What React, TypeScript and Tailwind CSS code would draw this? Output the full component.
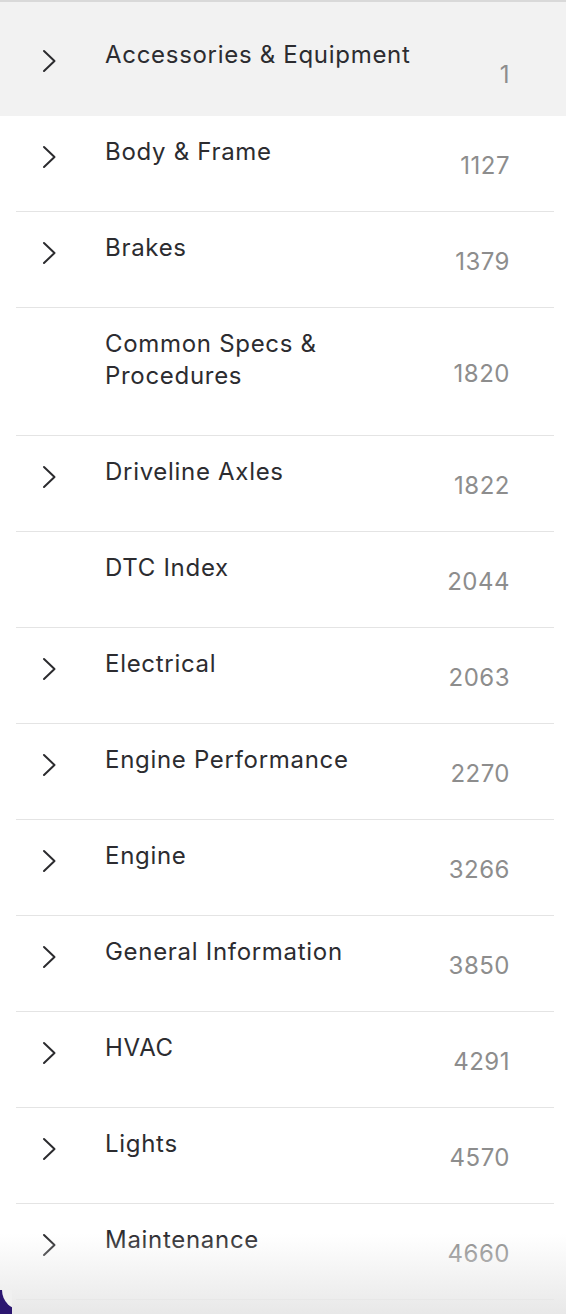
import React from "react";

type Item = { title: string; count: number; chevron: boolean };

const items: Item[] = [
  { title: "Accessories & Equipment", count: 1, chevron: true },
  { title: "Body & Frame", count: 1127, chevron: true },
  { title: "Brakes", count: 1379, chevron: true },
  { title: "Common Specs & Procedures", count: 1820, chevron: false },
  { title: "Driveline Axles", count: 1822, chevron: true },
  { title: "DTC Index", count: 2044, chevron: false },
  { title: "Electrical", count: 2063, chevron: true },
  { title: "Engine Performance", count: 2270, chevron: true },
  { title: "Engine", count: 3266, chevron: true },
  { title: "General Information", count: 3850, chevron: true },
  { title: "HVAC", count: 4291, chevron: true },
  { title: "Lights", count: 4570, chevron: true },
  { title: "Maintenance", count: 4660, chevron: true },
];

function Chevron() {
  return (
    <svg width="14" height="24" viewBox="0 0 14 24" fill="none">
      <path d="M2 2 L12.5 12 L2 22" stroke="#2b2b2e" strokeWidth="2" strokeLinecap="round" strokeLinejoin="round" />
    </svg>
  );
}

export default function App() {
  return (
    <div
      className="relative w-[566px] h-[1314px] overflow-hidden bg-white border-t-2 border-[#d9d9d9]"
      style={{ fontFamily: "Inter, 'Noto Sans', sans-serif" }}
    >
      <ul className="flex flex-col">
        {items.map((it, i) => (
          <li key={it.title} className={i === 0 ? "bg-[#f2f2f2]" : "bg-white"}>
            <div
              className={
                i === 0
                  ? "ml-4 mr-3 flex items-stretch"
                  : "ml-4 mr-3 flex items-stretch border-b border-[#e4e4e4]"
              }
            >
              <div className={i === 0 ? "w-[89px] shrink-0 pl-[26px] pt-[47px]" : "w-[89px] shrink-0 pl-[26px] pt-[29px]"}>
                {it.chevron && <Chevron />}
              </div>
              <div
                className={
                  i === 0
                    ? "flex-1 pt-[37px] pb-[45px] text-[24px] leading-[32px] tracking-[0.7px] text-[#2c2c30]"
                    : "flex-1 pt-[20px] pb-[43px] text-[24px] leading-[32px] tracking-[0.7px] text-[#2c2c30]"
                }
              >
                {it.title === "Common Specs & Procedures" ? (
                  <>
                    Common Specs &amp;
                    <br />
                    Procedures
                  </>
                ) : (
                  it.title
                )}
              </div>
              <div
                className={
                  i === 0
                    ? "flex items-center pt-[31px] pr-[44px] text-[24px] tracking-[0.5px] text-[#8d8d8d]"
                    : "flex items-center pt-[4px] pr-[44px] text-[24px] tracking-[0.5px] text-[#8d8d8d]"
                }
              >
                {it.count}
              </div>
            </div>
          </li>
        ))}
      </ul>
      <div className="pointer-events-none absolute inset-x-0 bottom-0 h-[80px] bg-gradient-to-b from-white/0 to-[#e8e8e8]" />
      <div className="pointer-events-none absolute left-0 bottom-0 w-[12px] h-[24px] overflow-hidden">
        <div className="absolute left-0 bottom-0 w-[12px] h-[24px] bg-[#2b1670]" />
        <div className="absolute left-[2px] bottom-[4px] w-[40px] h-[60px] rounded-bl-[20px] bg-[#f0f0f0]" />
      </div>
    </div>
  );
}
